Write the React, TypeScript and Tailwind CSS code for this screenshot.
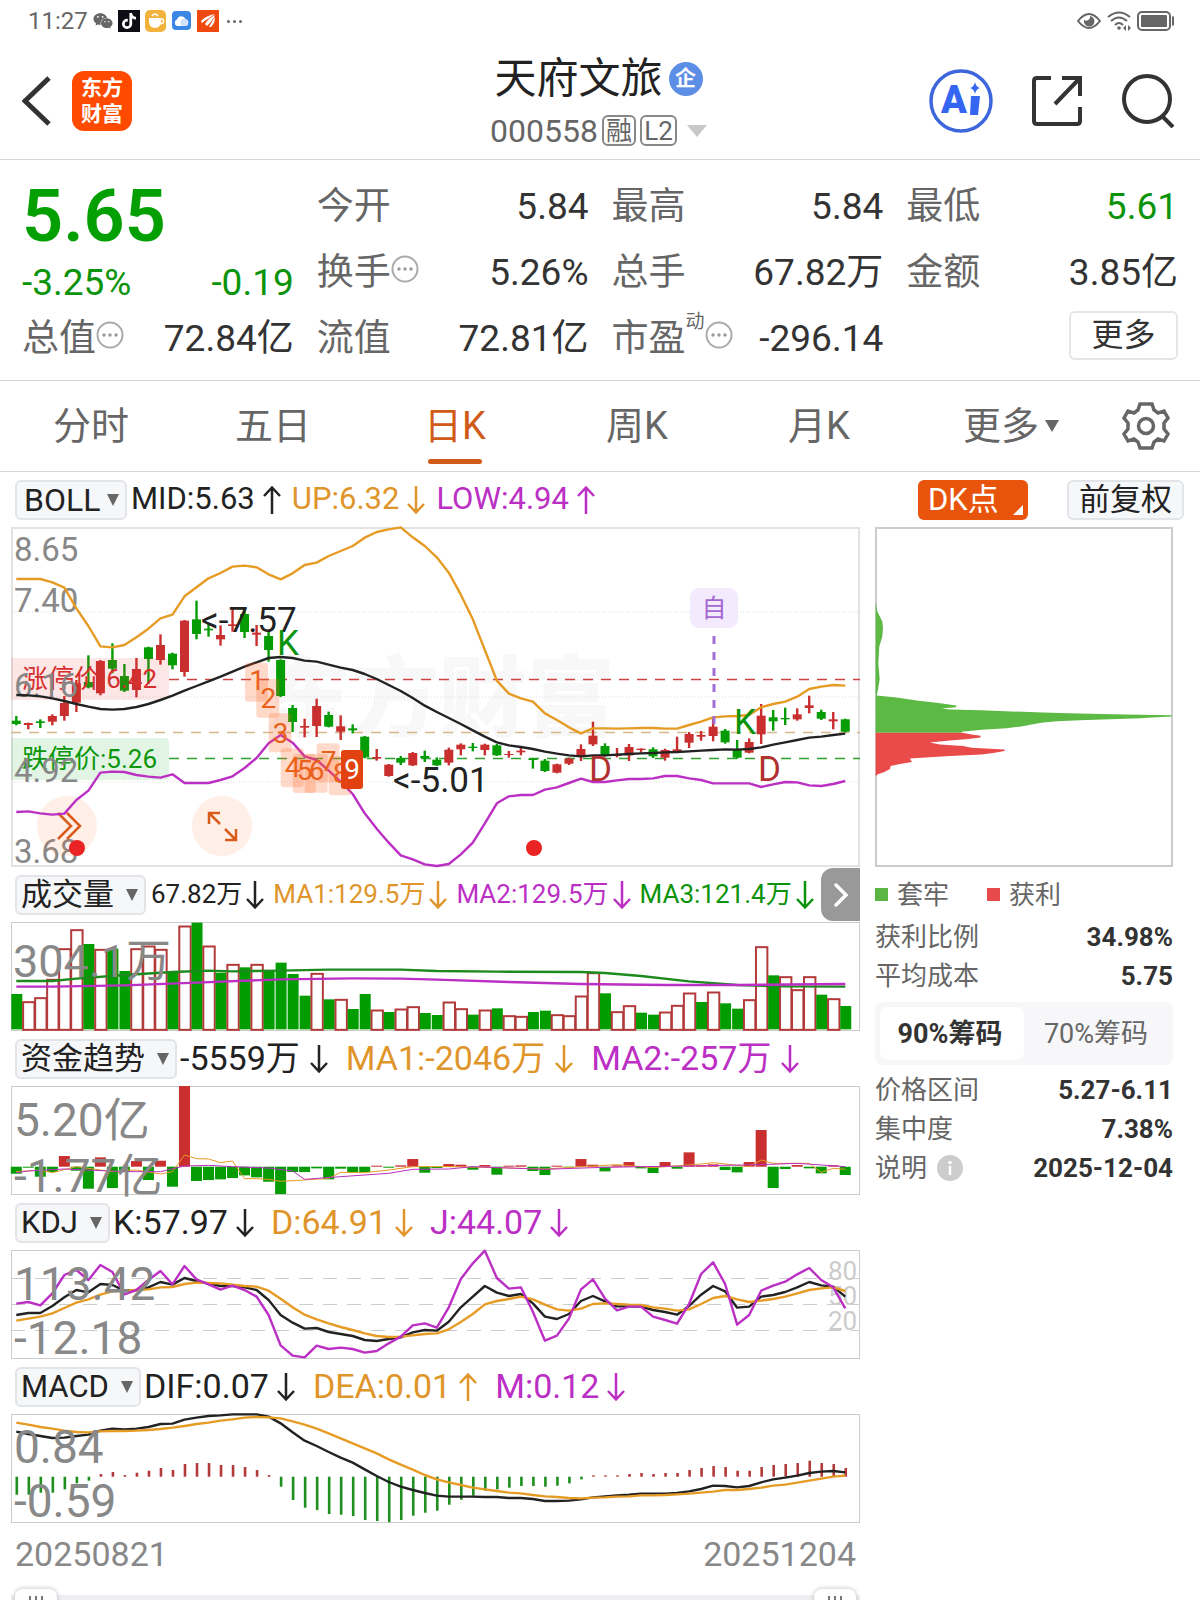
import React, { useState } from 'react'
import { FaTiktok, FaWeixin } from 'react-icons/fa'

const RED = '#c92f2f'
const GREEN = '#059c05'
const ORANGE = '#e69b24'
const PURPLE = '#bb2fc4'
const BLACK = '#222222'

/* Chart data. Heights are device pixels, three to one css pixel */

type Candle = [string, number, number, number, number]

// colour, high, body top, body bottom, low
const candles: Candle[] = [
    ['g', 588, 602, 612, 616], ['r', 608, 609, 615, 628], ['g', 598, 604, 609, 624], ['r', 583, 588, 605, 616],
    ['r', 528, 549, 588, 602], ['r', 480, 490, 548, 576], ['g', 406, 486, 502, 505], ['r', 420, 423, 520, 526],
    ['g', 370, 420, 446, 460], ['g', 432, 468, 512, 516], ['r', 414, 447, 510, 532], ['g', 380, 382, 417, 492],
    ['r', 343, 375, 420, 434], ['g', 398, 401, 436, 448], ['r', 300, 302, 456, 470], ['g', 242, 298, 342, 358],
    ['g', 312, 326, 331, 350], ['r', 316, 345, 358, 377], ['r', 266, 313, 318, 335], ['g', 262, 282, 336, 354],
    ['r', 315, 338, 344, 378], ['g', 335, 348, 390, 425], ['g', 418, 420, 528, 531], ['g', 555, 564, 606, 636],
    ['r', 596, 618, 623, 652], ['r', 536, 558, 618, 651], ['g', 575, 585, 620, 622], ['r', 586, 619, 635, 660],
    ['g', 613, 625, 631, 640], ['g', 648, 650, 712, 715], ['r', 687, 711, 716, 722], ['r', 732, 734, 768, 770],
    ['g', 708, 714, 728, 735], ['r', 696, 699, 736, 738], ['g', 692, 708, 714, 726], ['g', 712, 719, 736, 738],
    ['r', 683, 689, 728, 736], ['r', 670, 674, 688, 706], ['g', 669, 680, 684, 694], ['r', 671, 674, 690, 706],
    ['g', 672, 676, 706, 708], ['r', 693, 702, 705, 713], ['r', 683, 692, 697, 706], ['g', 715, 716, 720, 746],
    ['g', 717, 722, 753, 756], ['r', 731, 733, 758, 760], ['r', 713, 716, 731, 735], ['r', 673, 687, 708, 723],
    ['r', 605, 647, 673, 678], ['g', 670, 678, 706, 710], ['r', 684, 704, 708, 712], ['r', 672, 681, 706, 723],
    ['r', 685, 686, 690, 698], ['g', 682, 688, 709, 714], ['r', 686, 690, 713, 722], ['r', 650, 688, 693, 698],
    ['r', 636, 642, 668, 684], ['r', 633, 645, 650, 662], ['r', 595, 620, 648, 664], ['g', 627, 632, 667, 671],
    ['g', 660, 688, 713, 716], ['r', 655, 666, 698, 700], ['r', 552, 587, 643, 672], ['g', 570, 592, 604, 632],
    ['g', 563, 594, 598, 615], ['r', 565, 583, 598, 602], ['r', 527, 556, 564, 580], ['g', 569, 576, 596, 600],
    ['r', 576, 598, 604, 628], ['g', 596, 598, 635, 637],
]

const bollUp = [
    177, 177, 177, 187, 203, 265, 318, 379, 382, 375, 352, 326, 295, 284, 229, 202, 175, 159, 140, 137, 142, 163, 178,
    160, 135, 128, 108, 93, 78, 53, 36, 28, 22, 52, 78, 112, 158, 224, 298, 390, 482, 521, 535, 545, 580, 600, 622,
    640, 625, 625, 626, 625, 624, 624, 626, 626, 615, 605, 592, 589, 588, 585, 562, 552, 545, 530, 507, 500, 495, 497,
]
const bollMid = [
    525, 526, 529, 535, 543, 552, 560, 567, 569, 567, 561, 552, 540, 527, 512, 498, 484, 470, 455, 440, 427, 414, 411,
    414, 422, 425, 434, 443, 450, 462, 477, 495, 513, 534, 557, 576, 594, 612, 631, 650, 667, 676, 681, 687, 695, 701,
    706, 709, 706, 706, 704, 702, 700, 699, 697, 696, 694, 692, 690, 688, 689, 687, 682, 674, 667, 660, 653, 650, 645, 641,
]
const bollLow = [
    876, 874, 880, 884, 881, 840, 812, 758, 755, 756, 765, 770, 773, 763, 789, 789, 789, 780, 769, 744, 714, 670, 645,
    668, 709, 720, 752, 785, 822, 880, 926, 968, 1006, 1018, 1033, 1038, 1032, 1003, 968, 910, 850, 829, 825, 825, 809,
    802, 789, 776, 786, 786, 781, 777, 777, 775, 768, 768, 775, 780, 790, 790, 790, 790, 801, 793, 786, 787, 796, 798, 792, 783,
]

const volumeTop = [
    372, 395, 383, 328, 236, 179, 222, 238, 236, 303, 236, 228, 238, 303, 168, 158, 228, 308, 283, 292, 283, 303, 278,
    312, 377, 310, 388, 388, 417, 372, 420, 426, 417, 410, 429, 435, 396, 416, 434, 420, 415, 437, 439, 426, 422, 434,
    437, 378, 308, 370, 425, 407, 428, 434, 426, 406, 369, 396, 366, 400, 416, 389, 230, 316, 320, 359, 320, 374, 386, 408,
]
const volumeColor = 'grrrrrgrggrrrgrgrgrgrgggg' + 'rgrggrgrrggrrgrgrrggrrrrgrrggrrrgrggrrgrrrgrg'

const fund = [
    21, 3, 30, 16, -32, 12, 66, -28, 64, 16, -17, 40, -18, 60, -242, 43, 40, 38, 34, 26, 32, 45, 82, 16, 16, 5, 38, 6,
    16, 16, -3, 3, -4, -23, 18, 4, -8, -6, 9, -5, 24, -3, -4, 13, 25, -3, 2, -23, -6, 14, -4, -14, 5, 19, -14, 6, -43,
    -4, -7, 10, 17, -14, -110, 64, 7, -5, 5, 20, -4, 25,
]

const kdjK = [
    345, 339, 339, 318, 292, 270, 277, 252, 255, 272, 270, 262, 246, 254, 234, 243, 251, 258, 258, 262, 270, 300, 345,
    368, 386, 384, 396, 402, 408, 420, 423, 417, 412, 397, 390, 392, 365, 322, 290, 258, 278, 288, 282, 310, 350, 357,
    342, 303, 288, 304, 319, 319, 320, 330, 336, 344, 318, 284, 258, 274, 323, 320, 290, 285, 276, 262, 246, 256, 260, 290,
]
const kdjD = [
    362, 356, 350, 340, 324, 308, 298, 284, 274, 272, 270, 268, 262, 261, 252, 248, 249, 250, 254, 258, 260, 272, 296,
    322, 344, 358, 370, 381, 390, 400, 408, 411, 410, 406, 402, 400, 388, 366, 342, 313, 303, 297, 290, 298, 314, 328,
    332, 326, 312, 310, 312, 314, 315, 322, 326, 332, 328, 312, 294, 288, 298, 306, 302, 297, 290, 280, 270, 265, 262, 273,
]
const kdjJ = [
    311, 306, 316, 280, 225, 210, 240, 195, 216, 283, 270, 240, 213, 253, 198, 238, 253, 269, 257, 270, 290, 345, 436,
    467, 472, 437, 447, 443, 447, 458, 453, 430, 410, 376, 370, 383, 322, 237, 190, 152, 234, 266, 262, 335, 422, 407,
    356, 268, 238, 296, 331, 320, 320, 350, 360, 371, 312, 222, 187, 252, 374, 345, 272, 257, 245, 223, 204, 240, 262, 325,
]

const macd = [
    54, 54, 48, 48, 38, 20, 12, -8, -14, -5, -12, -18, -26, -20, -38, -41, -41, -35, -35, -29, -20, -5, 30, 70, 93,
    100, 112, 114, 118, 130, 133, 136, 130, 117, 108, 102, 84, 69, 57, 42, 38, 33, 28, 28, 30, 27, 20, 8, -4, -4, -4,
    -8, -11, -8, -11, -11, -20, -26, -32, -29, -18, -18, -29, -35, -38, -41, -48, -41, -38, -26,
]
const macdDif = [
    695, 702, 708, 714, 713, 708, 704, 692, 686, 688, 686, 681, 672, 671, 659, 653, 648, 646, 643, 643, 643, 650, 670,
    697, 722, 738, 756, 773, 788, 808, 828, 846, 860, 870, 879, 887, 890, 890, 890, 891, 891, 894, 894, 897, 903, 903,
    902, 898, 892, 889, 886, 884, 881, 881, 881, 879, 874, 867, 857, 858, 862, 858, 847, 838, 833, 827, 819, 815, 813, 817,
]
const macdDea = [
    668, 674, 681, 686, 692, 696, 697, 694, 693, 693, 692, 690, 687, 683, 678, 672, 668, 662, 658, 653, 651, 652, 655,
    664, 674, 686, 700, 715, 730, 745, 760, 778, 794, 809, 825, 838, 847, 855, 863, 868, 873, 878, 880, 885, 889, 891,
    894, 895, 893, 892, 890, 889, 886, 886, 885, 883, 881, 878, 875, 870, 870, 867, 863, 857, 854, 848, 842, 836, 830, 827,
]

const px = (i: number) => 5.3 + i * 12.014

const series = (data: number[], offset: number) => data.map((v, i) => `${px(i)},${v / 3 - offset}`).join(' ')

const points = (data: number[][], offset: number) => data.map(([i, v]) => `${px(i)},${v / 3 - offset}`).join(' ')

function Line({ pts, color, width = 2.4 }: { pts: string; color: string; width?: number }) {
    return <polyline points={pts} fill="none" stroke={color} strokeWidth={width} strokeLinejoin="round" />
}

function Arrow({ up }: { up?: boolean }) {
    return (
        <svg viewBox="0 0 18 30" className="w-[18px] h-[30px] flex-none" fill="none" stroke="currentColor" strokeWidth="2.5">
            {up ? <path d="M9 29V2M1 11L9 2.5L17 11" /> : <path d="M9 1V28M1 19L9 27.5L17 19" />}
        </svg>
    )
}

function Dots() {
    return (
        <svg viewBox="0 0 28 28" className="w-7 h-7 mb-2 flex-none" fill="none" stroke="#aaaaaa" strokeWidth="2">
            <circle cx="14" cy="14" r="12.5" />
            <g fill="#999999" stroke="none">
                <circle cx="8" cy="14" r="1.7" />
                <circle cx="14" cy="14" r="1.7" />
                <circle cx="20" cy="14" r="1.7" />
            </g>
        </svg>
    )
}

function StatusBar() {
    return (
        <div className="flex items-center justify-between h-[42px] pl-7 pr-[25px] text-[#666666]">
            <div className="flex items-center gap-[5px]">
                <span className="text-[24px] leading-none">11:27</span>
                <FaWeixin className="w-5 h-5" />
                <span className="flex items-center justify-center w-[22px] h-[22px] bg-[#0d0d16] text-white">
                    <FaTiktok className="w-4 h-4" />
                </span>
                <svg viewBox="0 0 22 22" className="w-[22px] h-[22px]">
                    <rect width="21" height="22" rx="5" fill="#f2b33d" />
                    <path d="M4 8h12v4a6 6 0 0 1-12 0z" fill="#ffffff" />
                    <path d="M7 6q3-4 6 0M16 9q4 0 2 4l-3 1" fill="none" stroke="#ffffff" strokeWidth="1.5" />
                </svg>
                <svg viewBox="0 0 20 20" className="w-5 h-5">
                    <rect width="19" height="19" rx="4" fill="#3c86e4" />
                    <path d="M5 15a3.4 3.4 0 0 1 0-6.4a4.5 4.5 0 0 1 8.5-.5a3.6 3.6 0 0 1 .5 6.9z" fill="#ffffff" />
                    <circle cx="12" cy="11.5" r="3.5" fill="#cfe2fb" />
                </svg>
                <svg viewBox="0 0 22 22" className="w-[22px] h-[22px]">
                    <rect width="22" height="22" fill="#ee4a10" />
                    <path d="M4 11C8 7 12 5 18 4C14 7 10 9 5 13zM8 14C10 10 14 7 18 5C16 10 14 12 10 16zM12 17C14 13 16 10 18 7C18 11 17 14 14 17z" fill="#ffffff" />
                </svg>
                <span className="flex gap-[3px] ml-[3px]">
                    <i className="w-[3px] h-[3px] rounded-full bg-[#666666]" />
                    <i className="w-[3px] h-[3px] rounded-full bg-[#666666]" />
                    <i className="w-[3px] h-[3px] rounded-full bg-[#666666]" />
                </span>
            </div>
            <div className="flex items-center gap-[6px]">
                <svg viewBox="0 0 24 18" className="w-6 h-[18px]" fill="none" stroke="currentColor" strokeWidth="2">
                    <path d="M1 9Q12-5 23 9Q12 23 1 9z" />
                    <path d="M13 4a5.3 5.3 0 1 1-6 4q3 1.5 5-.5q1.5-1.5 1-3.5z" fill="currentColor" stroke="none" />
                </svg>
                <svg viewBox="0 0 24 20" className="w-6 h-5" fill="none" stroke="currentColor" strokeWidth="2">
                    <path d="M1 6Q12-3 23 6M4 10Q12 3 20 10M8 14Q12 10 16 14" />
                    <circle cx="12" cy="17" r="1.8" fill="currentColor" stroke="none" />
                    <path d="M16 17l3-3v6zM24 17l-3-3v6z" fill="currentColor" stroke="none" />
                </svg>
                <svg viewBox="0 0 38 20" className="w-[38px] h-5" fill="none" stroke="currentColor" strokeWidth="2">
                    <rect x="1" y="1" width="32" height="18" rx="4" />
                    <rect x="4" y="4" width="26" height="12" rx="1" fill="currentColor" stroke="none" />
                    <path d="M36 5.5v9" />
                </svg>
            </div>
        </div>
    )
}

function Header() {
    return (
        <header className="flex items-center h-[118px] pl-[22px] pr-[25px] border-b border-[#d6d6d6]">
            {/* Left */}
            <div className="flex flex-1 items-center gap-5">
                <button aria-label="返回">
                    <svg viewBox="0 0 30 50" className="w-[30px] h-[50px]" fill="none" stroke="#333333" strokeWidth="5">
                        <path d="M27 2L3 25L27 48" />
                    </svg>
                </button>
                <div className="flex flex-col items-center justify-center w-[60px] h-[60px] rounded-xl bg-[#ff4a00] text-white text-[21px] leading-[26px] font-bold">
                    <span>东方</span>
                    <span>财富</span>
                </div>
            </div>

            {/* Title */}
            <div className="flex flex-col items-center pt-2">
                <div className="flex items-center gap-[6px] h-[52px]">
                    <h1 className="text-[42px] leading-[52px] text-[#222222]">天府文旅</h1>
                    <span className="flex items-center justify-center w-[34px] h-[34px] rounded-full bg-[#5d8ee6] text-white text-[21px] font-bold">企</span>
                </div>
                <button className="flex items-center gap-1 h-[52px] text-[#666666]">
                    <span className="text-[32px]">000558</span>
                    <span className="flex items-center justify-center w-[34px] h-[31px] border-2 border-[#888888] rounded-md text-[26px] leading-none">融</span>
                    <span className="flex items-center justify-center w-[37px] h-[31px] border-2 border-[#888888] rounded-md text-[26px] leading-none">L2</span>
                    <svg viewBox="0 0 20 12" className="w-5 h-3 ml-[6px]"><path d="M0 0h20L10 12z" fill="#c8c8c8" /></svg>
                </button>
            </div>

            {/* Actions */}
            <div className="flex flex-1 items-center justify-end gap-[38px]">
                <button aria-label="Ai">
                    <svg viewBox="0 0 64 64" className="w-16 h-16">
                        <circle cx="32" cy="32" r="30" fill="none" stroke="#3d66dd" strokeWidth="3.5" />
                        <text x="12" y="44" fontSize="38" fontWeight="900" fill="#3566f2">A</text>
                        <path d="M42 27h9l-2 19h-8z" fill="#3566f2" />
                        <path d="M46 13q1 5 5 6q-4 1-5 6q-1-5-5-6q4-1 5-6z" fill="#3566f2" />
                    </svg>
                </button>
                <button aria-label="分享">
                    <svg viewBox="0 0 52 52" className="w-[52px] h-[52px]" fill="none" stroke="#333333" strokeWidth="4">
                        <path d="M20 3H6Q3 3 3 6V46Q3 49 6 49H46Q49 49 49 46V32" />
                        <path d="M31 3H49V21M49 3L24 29" />
                    </svg>
                </button>
                <button aria-label="搜索">
                    <svg viewBox="0 0 54 54" className="w-[54px] h-[54px]" fill="none" stroke="#333333" strokeWidth="4">
                        <circle cx="26" cy="25" r="23" />
                        <path d="M41 42L52 53" />
                    </svg>
                </button>
            </div>
        </header>
    )
}

function Cell({ label, value, dots, sup, green }: { label: string; value: string; dots?: boolean; sup?: string; green?: boolean }) {
    return (
        <div className="flex items-center h-[66px] pt-1">
            <dt className="flex items-center text-[#666666]">
                {label}
                {sup && <span className="self-start text-[19px] leading-5">{sup}</span>}
                {dots && <Dots />}
            </dt>
            <dd className={green ? 'ml-auto text-[#0b930b]' : 'ml-auto text-[#333333]'}>{value}</dd>
        </div>
    )
}

function Quote() {
    return (
        <section className="grid grid-cols-4 gap-x-[23px] pt-3 pb-[10px] pl-[22px] pr-[22px] text-[37px] leading-[54px] border-b border-[#d6d6d6]">
            <dl>
                <div className="h-[88px] text-[72px] leading-[90px] font-semibold text-[#039f03]">5.65</div>
                <div className="flex items-center justify-between h-11 pt-[2px] text-[#0b930b]">
                    <span>-3.25%</span>
                    <span>-0.19</span>
                </div>
                <Cell label="总值" value="72.84亿" dots />
            </dl>
            <dl>
                <Cell label="今开" value="5.84" />
                <Cell label="换手" value="5.26%" dots />
                <Cell label="流值" value="72.81亿" />
            </dl>
            <dl>
                <Cell label="最高" value="5.84" />
                <Cell label="总手" value="67.82万" />
                <Cell label="市盈" value="-296.14" sup="动" dots />
            </dl>
            <div>
                <dl>
                    <Cell label="最低" value="5.61" green />
                    <Cell label="金额" value="3.85亿" />
                </dl>
                <div className="flex items-center justify-end h-[66px] pb-1">
                    <button className="w-[109px] h-[49px] border-2 border-[#e6e6e6] rounded-md text-[32px] leading-none text-[#333333]">更多</button>
                </div>
            </div>
        </section>
    )
}

function Tabs() {
    const [tab, setTab] = useState('日K')

    return (
        <nav className="flex items-center h-[91px] border-b border-[#d6d6d6] text-[38px] text-[#666666]">
            {['分时', '五日', '日K', '周K', '月K'].map((name) => (
                <button
                    key={name}
                    onClick={() => setTab(name)}
                    className={name === tab ? 'relative flex-1 h-[90px] text-[#d05a18]' : 'relative flex-1 h-[90px]'}
                >
                    {name}
                    {name === tab && <span className="absolute bottom-[7px] left-1/2 -translate-x-1/2 w-[54px] h-[5px] rounded-full bg-[#d05a18]" />}
                </button>
            ))}
            <button className="flex-1 h-[90px]">
                <span className="flex items-center justify-center gap-[6px] pl-5">
                    更多
                    <svg viewBox="0 0 14 12" className="w-[14px] h-3"><path d="M0 0h14L7 12z" fill="#666666" /></svg>
                </span>
            </button>
            <button aria-label="设置" className="flex items-center justify-center w-[108px] h-[90px]">
                <svg viewBox="-25 -25 50 50" className="w-[50px] h-[50px]" fill="none" stroke="#666666" strokeWidth="3.5">
                    <path d="M-6-22H6L8-16L12-13L18-15L22-8L18-3V3L22 8L18 15L12 13L8 16L6 22H-6L-8 16L-12 13L-18 15L-22 8L-18 3V-3L-22-8L-18-15L-12-13L-8-16Z" />
                    <circle r="7.5" />
                </svg>
            </button>
        </nav>
    )
}

function Picker({ name, tight }: { name: string; tight?: boolean }) {
    return (
        <span className="relative flex-none">
            <select
                aria-label="指标"
                className={
                    'block h-10 appearance-none border-2 border-[#e2e4e8] rounded-md bg-[#f6f7f9] leading-9 text-[#222222] ' +
                    (tight ? 'pl-[7px] pr-6 text-[32px]' : 'pl-1 pr-[30px] text-[31px]')
                }
            >
                <option>{name}</option>
            </select>
            <svg viewBox="0 0 12 12" className="absolute w-3 h-3 top-[14px] right-2 pointer-events-none">
                <path d="M0 0h12L6 12z" fill="#666666" />
            </svg>
        </span>
    )
}

function Value({ text, color, up, gap = 'gap-2' }: { text: string; color: string; up?: boolean; gap?: string }) {
    return (
        <span className={'flex items-center whitespace-nowrap ' + gap + ' ' + color}>
            {text}
            <Arrow up={up} />
        </span>
    )
}

function Frame({ height }: { height: number }) {
    return <rect x="0.5" y="0.5" width="848" height={height - 1} fill="none" stroke="#cccccc" />
}

const tags = [
    ['1', 735, 428, 511], ['2', 769, 476, 563], ['3', 806, 580, 668], ['4', 842, 685, 770],
    ['5', 878, 702, 780], ['6', 914, 701, 780], ['7', 950, 670, 752], ['8', 986, 709, 790],
] as [string, number, number, number][]

function KChart() {
    return (
        <svg viewBox="0 0 849 340" className="block w-full h-auto overflow-visible">
            <text x="252" y="202" fontSize="88" fontWeight="900" fill="#f8f8f8">东方财富</text>
            <rect x="1" y="1" width="847" height="338" fill="none" stroke="#e2e2e2" strokeWidth="2" />
            <g stroke="#dddddd" strokeDasharray="1 2">
                <path d="M0 85H849M0 170H849M0 255H849" />
            </g>

            {/* Limit prices */}
            <path d="M158 152.500H849" stroke="#cc4444" strokeWidth="1.3" strokeDasharray="10 8" />
            <path d="M0 205.500H849" stroke="#d6b98a" strokeWidth="1.3" strokeDasharray="10 8" />
            <path d="M158 231.500H849" stroke="#2fa02f" strokeWidth="1.3" strokeDasharray="10 8" />

            {/* Candles */}
            {candles.map(([c, high, top, bottom, low], i) => (
                <g key={i} fill={c === 'r' ? RED : GREEN}>
                    <rect x={px(i) - 1.2} y={high / 3 - 7} width="2.4" height={(low - high) / 3} />
                    <rect x={px(i) - 4.5} y={top / 3 - 7} width="9" height={(bottom - top) / 3} />
                </g>
            ))}

            <path d="M0 131H154Q158 131 158 135V169Q158 173 154 173H0z" fill="#f04040" fillOpacity="0.13" />
            <path d="M0 211H154Q158 211 158 215V249Q158 253 154 253H0z" fill="#20b030" fillOpacity="0.13" />
            <text x="11" y="161" fontSize="26" fill="#d62f2f">涨停价:6.42</text>
            <text x="11" y="241" fontSize="26" fill="#0b960b">跌停价:5.26</text>

            {/* Axis */}
            <g fontSize="33" fill="#888888">
                <text x="3" y="34">8.65</text>
                <text x="3" y="85">7.40</text>
                <text x="3" y="170">6.16</text>
                <text x="3" y="255">4.92</text>
                <text x="3" y="336">3.68</text>
            </g>

            {/* Floating buttons */}
            <circle cx="56" cy="299" r="30" fill="#ff6a20" fillOpacity="0.11" />
            <path d="M47 286L60 299L47 312M56 286L69 299L56 312" fill="none" stroke="#d95c1c" strokeWidth="2.5" />
            <circle cx="211" cy="299" r="30" fill="#ff6a20" fillOpacity="0.11" />
            <path d="M198 297V286H209M198 286L209 297M214 313H225V302M225 313L214 302" fill="none" stroke="#d95c1c" strokeWidth="2.5" />
            <circle cx="66" cy="321" r="8" fill="#ea2424" />
            <circle cx="523" cy="321" r="8" fill="#ea2424" />

            <Line pts={series(bollUp, 7)} color={ORANGE} />
            <Line pts={series(bollMid, 7)} color={BLACK} />
            <Line pts={series(bollLow, 7)} color={PURPLE} />

            {/* Nine turns */}
            {tags.map(([n, x, y, base]) => (
                <g key={n} textAnchor="middle" fontSize="28">
                    <rect x={x / 3 - 11} y={y / 3 - 7} width="23" height="39" rx="3" fill="#ff6420" fillOpacity="0.24" />
                    <text x={x / 3 + 1} y={base / 3 - 7} fill="#e8601a">{n}</text>
                </g>
            ))}
            <rect x="330" y="223" width="22" height="39" rx="3" fill="#e2420f" />
            <text x="341" y="252" fontSize="28" textAnchor="middle" fill="#ffffff">9</text>

            <g fontSize="35">
                <text x="190" y="105" fill="#222222">&lt;-7.57</text>
                <text x="382" y="265" fill="#222222">&lt;-5.01</text>
                <text x="266" y="128" fill="#0b930b">K</text>
                <text x="723" y="207" fill="#0b930b">K</text>
                <text x="578" y="254" fill="#b23030">D</text>
                <text x="747" y="254" fill="#b23030">D</text>
            </g>

            {/* Watch list mark */}
            <path d="M703 109V197" stroke="#a06fd6" strokeWidth="3" strokeDasharray="8 8" />
            <rect x="679" y="61" width="48" height="40" rx="9" fill="#f4eafd" />
            <text x="703" y="90" fontSize="25" textAnchor="middle" fill="#a468d0">自</text>
        </svg>
    )
}

function VolumeChart() {
    return (
        <svg viewBox="0 0 849 109" className="block w-full h-auto overflow-visible">
            <Frame height={109} />
            {volumeTop.map((v, i) =>
                volumeColor[i] === 'r' ? (
                    <rect key={i} x={px(i) - 5.2} y={v / 3 - 51.5} width="11.4" height={(478 - v) / 3} fill="#ffffff" stroke="#b23a3a" strokeWidth="2" />
                ) : (
                    <rect key={i} x={px(i) - 5} y={v / 3 - 52} width="11" height={(478 - v) / 3} fill="#009c00" />
                ),
            )}
            <Line
                pts={points([[0, 333], [3, 333], [5, 326], [9, 315], [13, 306], [16, 302], [18, 304], [22, 302], [26, 299], [32, 299], [35, 303], [40, 305], [47, 306], [49, 309], [52, 318], [56, 334], [60, 345], [64, 349], [69, 350]], 52)}
                color="#1d8a1d"
            />
            <Line
                pts={points([[0, 350], [3, 350], [9, 346], [15, 338], [22, 328], [28, 325], [32, 326], [35, 329], [41, 336], [47, 342], [54, 345], [60, 345], [69, 342]], 52)}
                color={PURPLE}
            />
            <text x="2" y="55" fontSize="45" fill="#888888">304.1万</text>
        </svg>
    )
}

function FundChart() {
    return (
        <svg viewBox="0 0 849 109" className="block w-full h-auto overflow-visible">
            <Frame height={109} />
            {fund.map((v, i) => (
                <rect
                    key={i}
                    x={px(i) - 5.5}
                    y={v < 0 ? 80.7 + v / 3 : 80.7}
                    width="11"
                    height={Math.abs(v) / 3}
                    fill={v < 0 ? RED : GREEN}
                />
            ))}
            <Line
                pts={points([[0, 905], [2, 900], [3, 908], [5, 890], [8, 905], [10, 900], [12, 912], [13, 905], [14, 855], [15, 866], [16, 867], [17, 878], [18, 873], [19, 926], [20, 926], [21, 928], [22, 934], [24, 930], [26, 925], [27, 907], [29, 908], [31, 900], [33, 890], [36, 890], [40, 893], [44, 897], [48, 888], [50, 884], [53, 893], [57, 882], [58, 878], [61, 890], [62, 870], [63, 880], [66, 880], [67, 907], [68, 895], [69, 898]], 216)}
                color={ORANGE}
                width={1}
            />
            <Line
                pts={points([[0, 908], [1, 903], [4, 897], [9, 905], [12, 905], [14, 888], [16, 886], [18, 890], [21, 894], [23, 903], [24, 928], [27, 920], [31, 910], [33, 898], [36, 897], [38, 890], [44, 898], [48, 893], [52, 890], [56, 888], [62, 884], [65, 880], [69, 890]], 216)}
                color={PURPLE}
                width={1}
            />
            <g fontSize="46" fill="#888888">
                <text x="3" y="50">5.20亿</text>
                <text x="3" y="106">-1.77亿</text>
            </g>
        </svg>
    )
}

function KdjChart() {
    return (
        <svg viewBox="0 0 849 109" className="block w-full h-auto overflow-visible">
            <Frame height={109} />
            <path d="M0 28.500H849M0 54.500H849M0 80.500H849" stroke="#cccccc" strokeDasharray="14 10" />
            <g fontSize="26" fill="#cccccc">
                <text x="817" y="30">80</text>
                <text x="817" y="55">50</text>
                <text x="817" y="80">20</text>
            </g>
            <Line pts={series(kdjK, 50)} color={BLACK} />
            <Line pts={series(kdjD, 50)} color={ORANGE} />
            <Line pts={series(kdjJ, 50)} color={PURPLE} />
            <g fontSize="46" fill="#888888">
                <text x="3" y="50">113.42</text>
                <text x="3" y="104">-12.18</text>
            </g>
        </svg>
    )
}

function MacdChart() {
    return (
        <svg viewBox="0 0 849 109" className="block w-full h-auto overflow-visible">
            <Frame height={109} />
            {macd.map((v, i) => (
                <rect
                    key={i}
                    x={px(i) - 0.8}
                    y={v < 0 ? 62.7 + v / 3 : 62.7}
                    width="2.6"
                    height={Math.abs(v) / 3}
                    fill={v < 0 ? '#b23a3a' : '#1f8f1f'}
                />
            ))}
            <Line pts={series(macdDif, 214)} color={BLACK} />
            <Line pts={series(macdDea, 214)} color={ORANGE} />
            <g fontSize="46" fill="#888888">
                <text x="3" y="49">0.84</text>
                <text x="3" y="103">-0.59</text>
            </g>
        </svg>
    )
}

const thumb =
    'col-start-1 row-start-1 w-full h-10 m-0 appearance-none bg-transparent pointer-events-none [&::-webkit-slider-thumb]:pointer-events-auto [&::-webkit-slider-thumb]:appearance-none [&::-webkit-slider-thumb]:w-[42px] [&::-webkit-slider-thumb]:h-10 [&::-webkit-slider-thumb]:rounded-lg [&::-webkit-slider-thumb]:bg-white [&::-webkit-slider-thumb]:shadow-[0_0_5px_#bbbbbb] [&::-webkit-slider-thumb]:bg-[repeating-linear-gradient(90deg,#777777_0_2px,transparent_2px_6px)] [&::-webkit-slider-thumb]:bg-[length:14px_14px] [&::-webkit-slider-thumb]:bg-[position:14px_7px] [&::-webkit-slider-thumb]:bg-no-repeat'

function RangeSlider() {
    return (
        <div className="h-[17px] overflow-hidden">
            <div className="grid pt-[6px] px-1">
                <span className="col-start-1 row-start-1 h-10 mt-[6px] -mx-1 bg-[#eeeff2]" />
                <input type="range" aria-label="开始日期" defaultValue={0} className={thumb} />
                <input type="range" aria-label="结束日期" defaultValue={100} className={thumb} />
            </div>
        </div>
    )
}

function Row({ label, value, info }: { label: string; value: string; info?: boolean }) {
    return (
        <div className="flex items-center justify-between h-[39px]">
            <dt className="flex items-center gap-[10px] text-[#666666]">
                {label}
                {info && (
                    <svg viewBox="0 0 26 26" className="w-[26px] h-[26px]">
                        <circle cx="13" cy="13" r="13" fill="#cccccc" />
                        <circle cx="13" cy="7.5" r="1.8" fill="#ffffff" />
                        <path d="M13 11V20" stroke="#ffffff" strokeWidth="2.5" />
                    </svg>
                )}
            </dt>
            <dd className="font-bold text-[#333333]">{value}</dd>
        </div>
    )
}

function Chips() {
    return (
        <aside className="w-[298px] flex-none text-[26px] leading-8">
            <svg viewBox="0 0 298 340" className="block w-full h-auto">
                <rect x="1" y="1" width="296" height="338" fill="none" stroke="#cccccc" strokeWidth="2" />
                <g transform="translate(-15 -7) scale(0.333)">
                    <path
                        d="M47 245L52 275L67 305L69 325L67 350L58 380L55 430L59 478L54 510L50 527L110 533L170 542L230 549L289 557V562L245 566L270 569L362 571L455 575L547 578L657 581L795 584L936 586V590L890 592L843 595L750 598L660 601L592 604L550 608L515 614L485 620L440 625L365 630L305 636V639H47z"
                        fill="#5bb944"
                    />
                    <path
                        d="M47 639H308L335 644L362 648V653L325 658L270 662L210 668L240 674L310 679L335 684L434 689V694L400 700L365 704L270 709L150 716L156 727L120 733L92 739L90 748L75 756L52 764L47 770z"
                        fill="#e94a4a"
                    />
                </g>
            </svg>

            <div className="flex items-center mt-2 h-[39px] text-[#666666]">
                <i className="w-[13px] h-[13px] mr-[9px] bg-[#5bb545]" />
                套牢
                <i className="w-[13px] h-[13px] ml-[38px] mr-[9px] bg-[#e64a4a]" />
                获利
            </div>
            <dl className="mt-[3px]">
                <Row label="获利比例" value="34.98%" />
                <Row label="平均成本" value="5.75" />
            </dl>
            <div className="flex mt-[7px] h-[63px] p-[5px] rounded-lg bg-[#f7f7fa] text-[27px]">
                <button className="w-36 pr-1 rounded-lg bg-white font-bold text-[#333333]">90%筹码</button>
                <button className="flex-1 text-[#666666]">70%筹码</button>
            </div>
            <dl className="mt-[5px]">
                <Row label="价格区间" value="5.27-6.11" />
                <Row label="集中度" value="7.38%" />
                <Row label="说明" value="2025-12-04" info />
            </dl>
        </aside>
    )
}

function App() {
    return (
        <div className="w-full bg-white font-[Roboto,'Noto_Sans_CJK_SC',sans-serif]">
            <StatusBar />
            <Header />
            <Quote />
            <Tabs />

            {/* Main indicator */}
            <div className="flex items-center h-[55px] pl-[15px] pr-4 text-[31px]">
                <Picker name="BOLL" tight />
                <div className="flex items-center gap-[11px] ml-1">
                    <Value text="MID:5.63" color="text-[#222222]" up />
                    <Value text="UP:6.32" color="text-[#e0952a]" />
                    <Value text="LOW:4.94" color="text-[#bb2fc4]" up />
                </div>
                <button className="relative ml-auto w-[110px] h-10 pl-[10px] rounded-md bg-[#e8540b] text-left leading-10 text-white">
                    DK点
                    <svg viewBox="0 0 10 10" className="absolute right-[5px] bottom-[5px] w-[10px] h-[10px]"><path d="M10 0V10H0z" fill="#ffffff" /></svg>
                </button>
                <button className="ml-[39px] w-[117px] h-10 border-2 border-[#e2e4e8] rounded-md bg-[#f6f7f9] leading-9 text-[#222222]">前复权</button>
            </div>

            <div className="flex items-start gap-[15px] pl-[11px] pr-[27px]">
                <main className="flex-1 min-w-0 text-[34px]">
                    <KChart />

                    <div className="flex items-center h-[55px] pl-1 text-[26px]">
                        <Picker name="成交量" />
                        <div className="flex items-center gap-[9px] ml-[5px]">
                            <Value text="67.82万" color="text-[#222222]" gap="gap-1" />
                            <Value text="MA1:129.5万" color="text-[#e0952a]" gap="gap-1" />
                            <Value text="MA2:129.5万" color="text-[#bb2fc4]" gap="gap-1" />
                            <Value text="MA3:121.4万" color="text-[#0b930b]" gap="gap-1" />
                        </div>
                        <button aria-label="更多指标" className="flex items-center justify-center ml-auto w-[39px] h-[53px] rounded-l-xl bg-[#999999]">
                            <svg viewBox="0 0 14 24" className="w-[14px] h-6" fill="none" stroke="#ffffff" strokeWidth="3.5" strokeLinecap="round"><path d="M2 2L12 12L2 22" /></svg>
                        </button>
                    </div>
                    <VolumeChart />

                    <div className="flex items-center h-[55px] pl-1">
                        <Picker name="资金趋势" />
                        <div className="flex items-center gap-[18px] ml-[3px]">
                            <Value text="-5559万" color="text-[#222222]" gap="gap-[10px]" />
                            <Value text="MA1:-2046万" color="text-[#e0952a]" gap="gap-[10px]" />
                            <Value text="MA2:-257万" color="text-[#bb2fc4]" gap="gap-[10px]" />
                        </div>
                    </div>
                    <FundChart />

                    <div className="flex items-center h-[55px] pl-1">
                        <Picker name="KDJ" />
                        <div className="flex items-center gap-[17px] ml-[3px]">
                            <Value text="K:57.97" color="text-[#222222]" />
                            <Value text="D:64.91" color="text-[#e0952a]" />
                            <Value text="J:44.07" color="text-[#bb2fc4]" />
                        </div>
                    </div>
                    <KdjChart />

                    <div className="flex items-center h-[55px] pl-1">
                        <Picker name="MACD" />
                        <div className="flex items-center gap-[18px] ml-[3px]">
                            <Value text="DIF:0.07" color="text-[#222222]" />
                            <Value text="DEA:0.01" color="text-[#e0952a]" up />
                            <Value text="M:0.12" color="text-[#bb2fc4]" />
                        </div>
                    </div>
                    <MacdChart />

                    <div className="flex items-center justify-between h-[60px] pt-[2px] px-1 text-[34px] text-[#888888]">
                        <span>20250821</span>
                        <span>20251204</span>
                    </div>
                    <RangeSlider />
                </main>

                <Chips />
            </div>
        </div>
    )
}

export default App
